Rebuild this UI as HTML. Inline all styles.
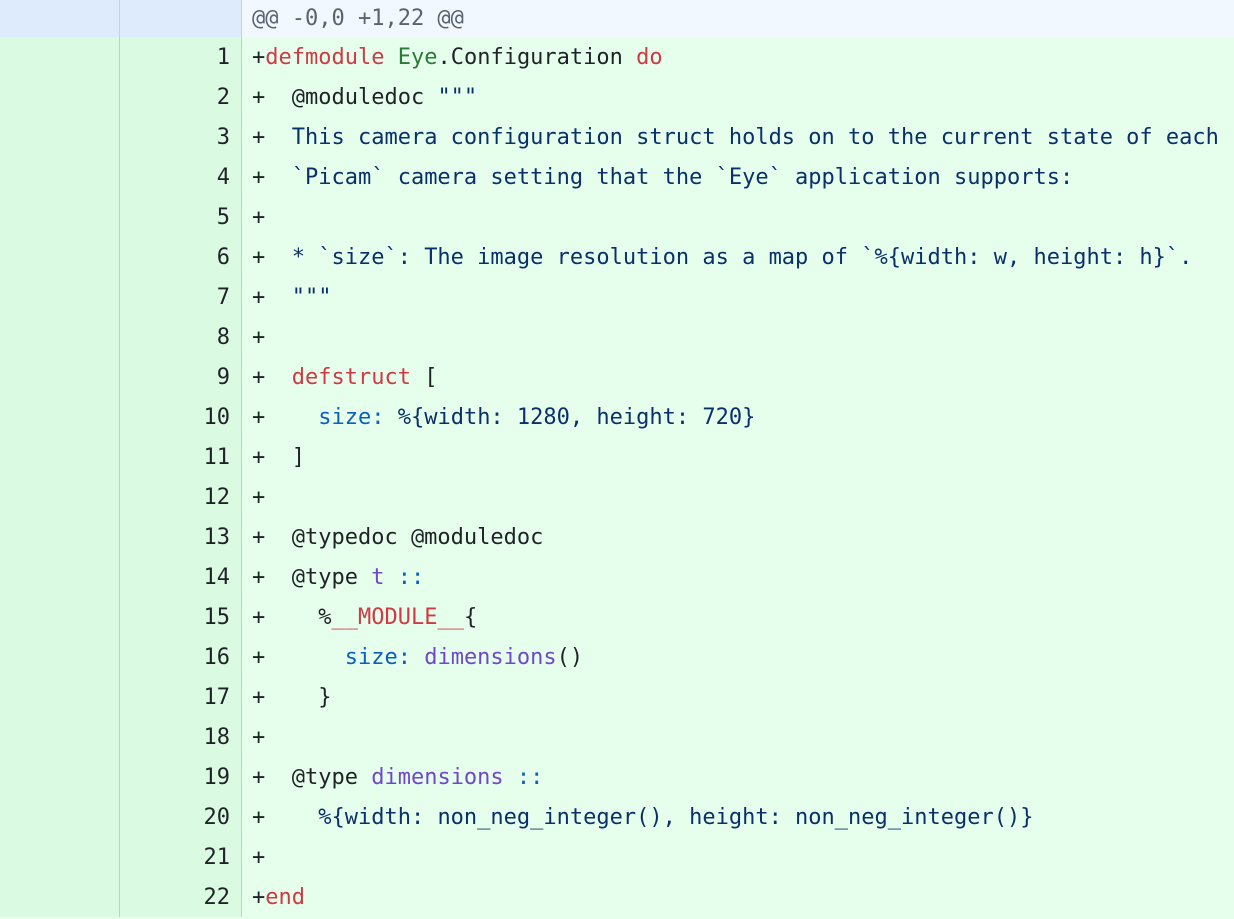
<!DOCTYPE html>
<html><head><meta charset="utf-8"><style>
body{margin:0;width:1234px;height:914px;overflow:hidden;background:#e6ffec;font-family:"DejaVu Sans Mono","Liberation Mono",monospace;font-size:22px;}
.row{display:flex;height:40px;line-height:42px;}
.hdr{height:37px;line-height:38px;}
.g1{width:119px;background:#dafbe1;border-right:1px solid #9fe6ae;flex:none}
.g2{width:110px;padding-right:11px;background:#dafbe1;border-right:1px solid #9fe6ae;text-align:right;color:#1f2328;flex:none}
.c{padding-left:10px;white-space:pre;color:#1f2328;background:#e6ffec;flex:1}
.hdr .g1,.hdr .g2{background:#ddebfd;border-right-color:#b6d3fb}
.hdr .c{background:#f1f8ff;color:#59636e}
.r{color:#cf3a44}.gr{color:#2a7a3a}.b{color:#0b5fc0}.p{color:#7047c8}.s{color:#0a3069}
</style></head><body>
<div class="row hdr"><div class="g1"></div><div class="g2"></div><div class="c">@@ -0,0 +1,22 @@</div></div>
<div class="row"><div class="g1"></div><div class="g2">1</div><div class="c">+<span class="r">defmodule</span> <span class="gr">Eye</span>.Configuration <span class="r">do</span></div></div>
<div class="row"><div class="g1"></div><div class="g2">2</div><div class="c">+  @moduledoc <span class="s">"""</span></div></div>
<div class="row"><div class="g1"></div><div class="g2">3</div><div class="c">+<span class="s">  This camera configuration struct holds on to the current state of each</span></div></div>
<div class="row"><div class="g1"></div><div class="g2">4</div><div class="c">+<span class="s">  `Picam` camera setting that the `Eye` application supports:</span></div></div>
<div class="row"><div class="g1"></div><div class="g2">5</div><div class="c">+</div></div>
<div class="row"><div class="g1"></div><div class="g2">6</div><div class="c">+<span class="s">  * `size`: The image resolution as a map of `%{width: w, height: h}`.</span></div></div>
<div class="row"><div class="g1"></div><div class="g2">7</div><div class="c">+<span class="s">  """</span></div></div>
<div class="row"><div class="g1"></div><div class="g2">8</div><div class="c">+</div></div>
<div class="row"><div class="g1"></div><div class="g2">9</div><div class="c">+  <span class="r">defstruct</span> [</div></div>
<div class="row"><div class="g1"></div><div class="g2">10</div><div class="c">+    <span class="b">size:</span> <span class="s">%{width: 1280, height: 720}</span></div></div>
<div class="row"><div class="g1"></div><div class="g2">11</div><div class="c">+  ]</div></div>
<div class="row"><div class="g1"></div><div class="g2">12</div><div class="c">+</div></div>
<div class="row"><div class="g1"></div><div class="g2">13</div><div class="c">+  @typedoc @moduledoc</div></div>
<div class="row"><div class="g1"></div><div class="g2">14</div><div class="c">+  @type <span class="p">t</span> <span class="b">::</span></div></div>
<div class="row"><div class="g1"></div><div class="g2">15</div><div class="c">+    %<span class="r">__MODULE__</span>{</div></div>
<div class="row"><div class="g1"></div><div class="g2">16</div><div class="c">+      <span class="b">size:</span> <span class="p">dimensions</span>()</div></div>
<div class="row"><div class="g1"></div><div class="g2">17</div><div class="c">+    }</div></div>
<div class="row"><div class="g1"></div><div class="g2">18</div><div class="c">+</div></div>
<div class="row"><div class="g1"></div><div class="g2">19</div><div class="c">+  @type <span class="p">dimensions</span> <span class="b">::</span></div></div>
<div class="row"><div class="g1"></div><div class="g2">20</div><div class="c">+    <span class="s">%{width: non_neg_integer(), height: non_neg_integer()}</span></div></div>
<div class="row"><div class="g1"></div><div class="g2">21</div><div class="c">+</div></div>
<div class="row"><div class="g1"></div><div class="g2">22</div><div class="c">+<span class="r">end</span></div></div>
</body></html>
